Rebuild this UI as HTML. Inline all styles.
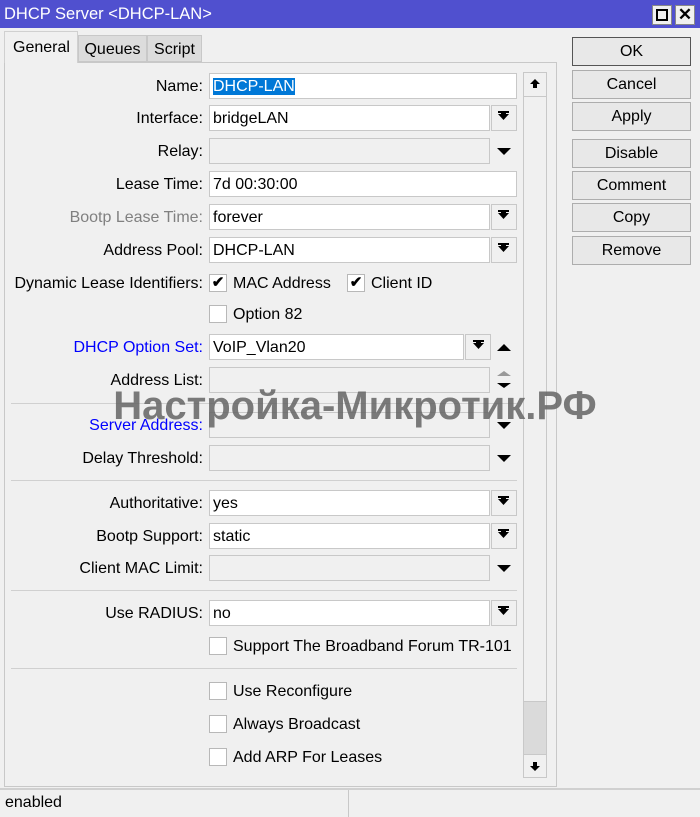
<!DOCTYPE html>
<html><head><meta charset="utf-8"><style>
*{box-sizing:border-box;margin:0;padding:0}
body{width:700px;height:817px;background:#f0f0f0;font-family:"Liberation Sans",sans-serif;font-size:16px;color:#000;position:relative;overflow:hidden}
.a{position:absolute}
.title{left:0;top:0;width:700px;height:28px;background:#5050cf;color:#fff;font-size:16.5px;line-height:28px;padding-left:4px}
.tb{top:5px;width:20px;height:20px;background:#f0f0f0;border:1px solid #888}
.lbl{right:497px;width:220px;text-align:right;line-height:28px;white-space:nowrap}
.in{height:26px;border:1px solid #c8c8c8;background:#fff;line-height:26px;padding-left:3px}
.dis{background:#f0f0f0;border-color:#c8c8c8}
.dd{width:26px;height:26px;border:1px solid #c8c8c8;background:#f0f0f0}
.btn{left:572px;width:119px;height:29px;border:1px solid #adadad;background:#e8e8e8;text-align:center;line-height:28px}
.cb{width:18px;height:18px;border:1px solid #b8b8b8;background:#fff;left:209px}
.ct{left:233px;line-height:21px}
.sep{left:11px;width:506px;height:1px;background:#d0d0d0}
svg{position:absolute}
</style></head><body>
<div class="a title">DHCP Server &lt;DHCP-LAN&gt;</div>
<div class="a tb" style="left:652px"><div class="a" style="left:3px;top:3px;width:12px;height:12px;border:2px solid #000"></div></div>
<div class="a tb" style="left:675px;font-weight:bold;font-size:17px;line-height:18px;text-align:center">✕</div>

<div class="a" style="left:4px;top:62px;width:553px;height:725px;border:1px solid #c8c8c8;background:#f0f0f0"></div>
<div class="a" style="left:4px;top:31px;width:74px;height:32px;background:#f0f0f0;border:1px solid #d0d0d0;border-bottom:none;line-height:31px;padding-left:8px">General</div>
<div class="a" style="left:78px;top:35px;width:69px;height:27px;background:#dcdcdc;border:1px solid #c8c8c8;line-height:27px;text-align:center">Queues</div>
<div class="a" style="left:147px;top:35px;width:55px;height:27px;background:#dcdcdc;border:1px solid #c8c8c8;line-height:27px;text-align:center">Script</div>

<div class="a btn" style="top:37px;border-color:#555">OK</div>
<div class="a btn" style="top:70px">Cancel</div>
<div class="a btn" style="top:102px">Apply</div>
<div class="a btn" style="top:139px">Disable</div>
<div class="a btn" style="top:171px">Comment</div>
<div class="a btn" style="top:203px">Copy</div>
<div class="a btn" style="top:236px">Remove</div>

<div class="a" style="left:523px;top:72px;width:24px;height:706px;background:#f0f0f0;border:1px solid #c8c8c8"></div>
<div class="a" style="left:524px;top:96px;width:22px;height:606px;border-top:1px solid #c8c8c8;border-bottom:1px solid #c8c8c8"></div>
<div class="a" style="left:524px;top:702px;width:22px;height:52px;background:#dadada"></div>
<div class="a" style="left:524px;top:754px;width:22px;height:1px;background:#c8c8c8"></div>
<svg style="left:529px;top:78px" width="12" height="12"><path d="M6 1 L11 6 H8 V10 H4 V6 H1Z"/></svg>
<svg style="left:529px;top:760px" width="12" height="12"><path d="M6 11 L11 6 H8 V2 H4 V6 H1Z"/></svg>

<div class="a lbl" style="top:73px">Name:</div>
<div class="a in" style="left:209px;top:73px;width:308px"><span style="background:#0078d7;color:#fff">DHCP-LAN</span></div>

<div class="a lbl" style="top:105px">Interface:</div>
<div class="a in" style="left:209px;top:105px;width:281px">bridgeLAN</div>
<div class="a dd" style="left:491px;top:105px"></div>

<div class="a lbl" style="top:138px">Relay:</div>
<div class="a in dis" style="left:209px;top:138px;width:281px"></div>

<div class="a lbl" style="top:171px">Lease Time:</div>
<div class="a in" style="left:209px;top:171px;width:308px">7d 00:30:00</div>

<div class="a lbl" style="top:204px;color:#808080">Bootp Lease Time:</div>
<div class="a in" style="left:209px;top:204px;width:281px">forever</div>
<div class="a dd" style="left:491px;top:204px"></div>

<div class="a lbl" style="top:237px">Address Pool:</div>
<div class="a in" style="left:209px;top:237px;width:281px">DHCP-LAN</div>
<div class="a dd" style="left:491px;top:237px"></div>

<div class="a lbl" style="top:270px">Dynamic Lease Identifiers:</div>
<div class="a cb" style="top:274px;text-align:center;line-height:16px;font-size:15px;font-weight:bold">✔</div>
<div class="a ct" style="top:273px">MAC Address</div>
<div class="a cb" style="left:347px;top:274px;text-align:center;line-height:16px;font-size:15px;font-weight:bold">✔</div>
<div class="a ct" style="left:371px;top:273px">Client ID</div>
<div class="a cb" style="top:305px"></div>
<div class="a ct" style="top:304px">Option 82</div>

<div class="a lbl" style="top:334px;color:#0000ff">DHCP Option Set:</div>
<div class="a in" style="left:209px;top:334px;width:255px">VoIP_Vlan20</div>
<div class="a dd" style="left:465px;top:334px"></div>

<div class="a lbl" style="top:367px">Address List:</div>
<div class="a in dis" style="left:209px;top:367px;width:281px"></div>
<div class="a sep" style="top:403px"></div>

<div class="a lbl" style="top:412px;color:#0000ff">Server Address:</div>
<div class="a in dis" style="left:209px;top:412px;width:281px"></div>
<div class="a lbl" style="top:445px">Delay Threshold:</div>
<div class="a in dis" style="left:209px;top:445px;width:281px"></div>
<div class="a sep" style="top:480px"></div>

<div class="a lbl" style="top:490px">Authoritative:</div>
<div class="a in" style="left:209px;top:490px;width:281px">yes</div>
<div class="a dd" style="left:491px;top:490px"></div>
<div class="a lbl" style="top:523px">Bootp Support:</div>
<div class="a in" style="left:209px;top:523px;width:281px">static</div>
<div class="a dd" style="left:491px;top:523px"></div>
<div class="a lbl" style="top:555px">Client MAC Limit:</div>
<div class="a in dis" style="left:209px;top:555px;width:281px"></div>
<div class="a sep" style="top:590px"></div>

<div class="a lbl" style="top:600px">Use RADIUS:</div>
<div class="a in" style="left:209px;top:600px;width:281px">no</div>
<div class="a dd" style="left:491px;top:600px"></div>
<div class="a cb" style="top:637px"></div>
<div class="a ct" style="top:636px">Support The Broadband Forum TR-101</div>
<div class="a sep" style="top:668px"></div>
<div class="a cb" style="top:682px"></div>
<div class="a ct" style="top:681px">Use Reconfigure</div>
<div class="a cb" style="top:715px"></div>
<div class="a ct" style="top:714px">Always Broadcast</div>
<div class="a cb" style="top:748px"></div>
<div class="a ct" style="top:747px">Add ARP For Leases</div>

<svg style="left:0;top:0" width="700" height="817">
<g fill="#000">
<g id="g"><rect x="498" y="111" width="11" height="2"/><path d="M498 114 H509 L503.5 120Z"/><rect x="501" y="113" width="5" height="3"/></g>
<use href="#g" y="99"/><use href="#g" y="132"/><use href="#g" y="385"/><use href="#g" y="418"/><use href="#g" y="495"/>
<use href="#g" x="-25" y="229"/>
<path d="M497 148 H511 L504 155Z"/>
<path d="M497 344 H511 L504 351Z" transform="rotate(180 504 347.5)"/>
<path d="M497 376 L504 371 L511 376Z" fill="#999"/><path d="M497 383 H511 L504 388Z"/>
<path d="M497 422 H511 L504 429Z"/>
<path d="M497 455 H511 L504 462Z"/>
<path d="M497 565 H511 L504 572Z"/>
</g></svg>

<div class="a" style="left:100px;top:384px;width:510px;text-align:center;font-size:40px;font-weight:bold;color:rgba(100,100,100,0.85);white-space:nowrap;line-height:44px">Настройка-Микротик.РФ</div>

<div class="a" style="left:0;top:788px;width:700px;height:2px;background:#d0d0d0"></div>
<div class="a" style="left:348px;top:790px;width:1px;height:27px;background:#c8c8c8"></div>
<div class="a" style="left:5px;top:793px;line-height:20px">enabled</div>
</body></html>
